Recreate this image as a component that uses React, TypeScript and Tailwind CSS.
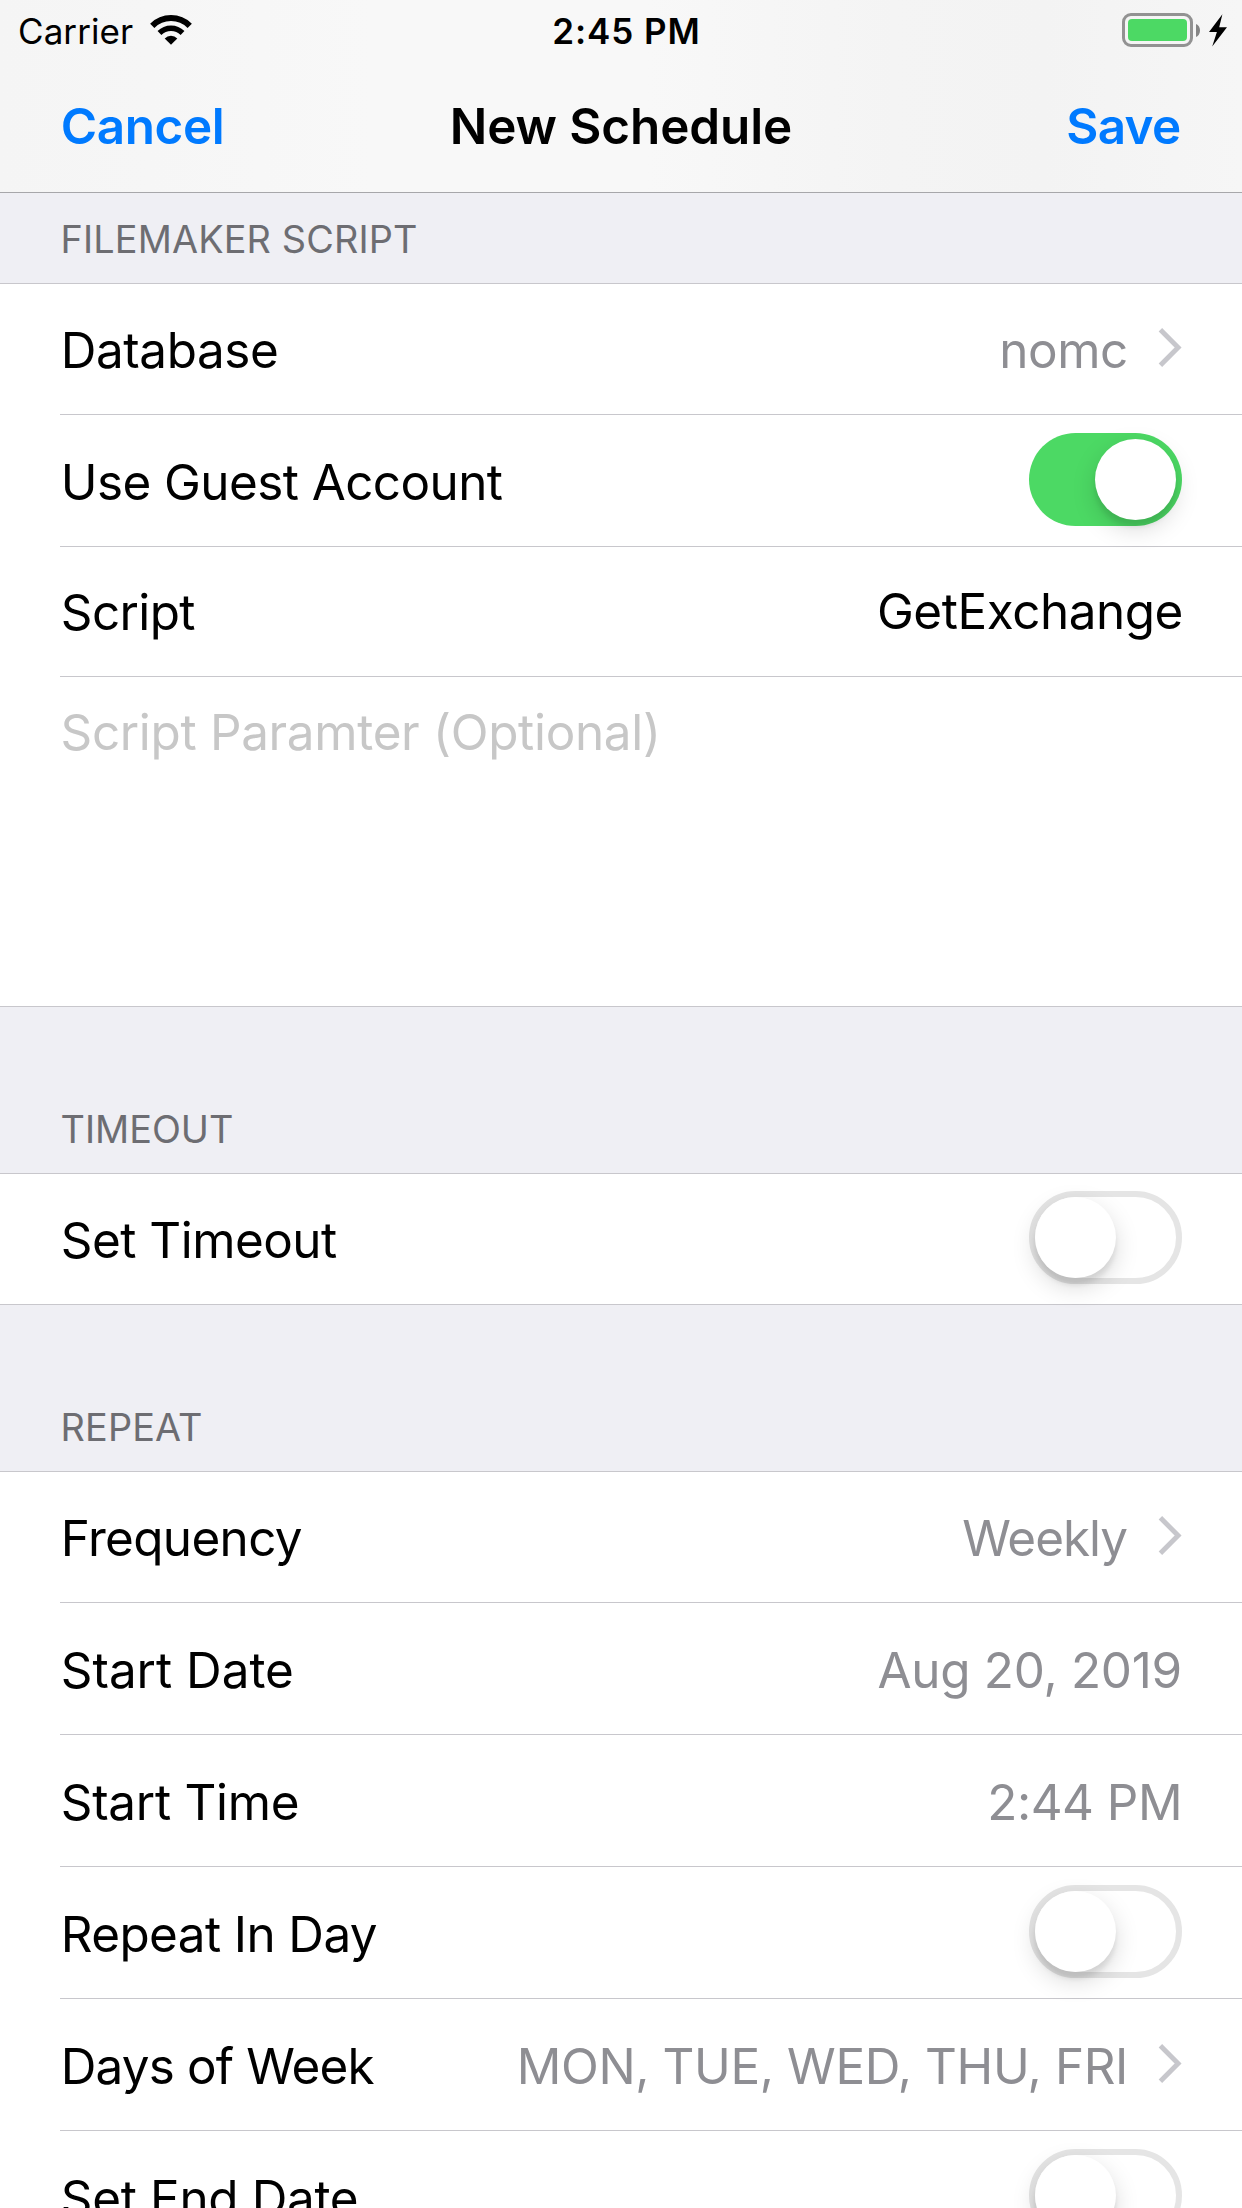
import type { ReactNode } from "react";

function WifiIcon() {
  return (
    <svg className="mt-[5px] ml-[17px] h-[31px] w-[42px]" viewBox="0 0 42 31" fill="none">
      <path d="M2.26 11.76A26.5 26.5 0 0 1 39.74 11.76" stroke="#000" strokeWidth="6" />
      <path d="M9.47 18.97A16.3 16.3 0 0 1 32.53 18.97" stroke="#000" strokeWidth="5.4" />
      <path d="M21 30.7L14.7 24.4A8.9 8.9 0 0 1 27.3 24.4Z" fill="#000" />
    </svg>
  );
}

function Battery() {
  return (
    <div className="mt-[4px] flex items-center">
      <div className="h-[34px] w-[71px] rounded-[9px] border-[3px] border-[#929292] p-[3px]">
        <div className="h-full w-full rounded-[4px] bg-[#4cd964]" />
      </div>
      <svg className="ml-[3px] h-[13px] w-[4px]" viewBox="0 0 4 13">
        <path d="M0 0C2.6 1 4 3.6 4 6.5S2.6 12 0 13Z" fill="#858585" />
      </svg>
      <svg className="ml-[9px] h-[33px] w-[18px]" viewBox="0 0 18 33">
        <path d="M13.4 0.3L0 18H7.9L3.2 32.6L18 13.2H10.2Z" fill="#000" />
      </svg>
    </div>
  );
}

function Chevron() {
  return (
    <svg className="mt-[8px] ml-[30px] h-[39px] w-[24px] shrink-0" viewBox="0 0 24 39" fill="none">
      <path d="M2.4 1.8L20.1 19.5L2.4 37.2" stroke="#c7c7cc" strokeWidth="4.9" />
    </svg>
  );
}

function Switch({ on = false }: { on?: boolean }) {
  return (
    <div
      className={
        on
          ? "-mt-[19px] flex h-[93px] w-[153px] shrink-0 justify-end rounded-full bg-[#4cd964] p-[6px]"
          : "-mt-[19px] flex h-[93px] w-[153px] shrink-0 justify-start rounded-full border-[6px] border-[#e5e5e5]"
      }
    >
      <div className="h-[81px] w-[81px] rounded-full bg-white shadow-[0_9px_24px_rgba(0,0,0,0.15),0_7px_5px_rgba(0,0,0,0.08)]" />
    </div>
  );
}

function SectionHeader({ title, className }: { title: string; className: string }) {
  return (
    <div
      className={`border-b border-[#c8c7cc] bg-[#efeff4] pl-[60.6px] text-[37.8px] leading-[46px] text-[#6d6d72] ${className}`}
    >
      {title}
    </div>
  );
}

function Row({
  label,
  className,
  last = false,
  children,
}: {
  label: string;
  className: string;
  last?: boolean;
  children: ReactNode;
}) {
  return (
    <div className={last ? "border-b border-[#c8c7cc] pl-[60px]" : "ml-[60px] border-b border-[#c8c7cc]"}>
      <div className={`flex items-start justify-between pr-[60px] ${className}`}>
        <span className="pl-[0.8px]">{label}</span>
        <div className="flex items-start tracking-normal">{children}</div>
      </div>
    </div>
  );
}

export default function App() {
  return (
    <div className="h-[2208px] w-[1242px] overflow-hidden bg-white font-['Inter',sans-serif] text-[49.4px] leading-[60px] whitespace-nowrap text-black">
      <header className="h-[193px] border-b border-[#a7a7aa] bg-[linear-gradient(90deg,#f5f5f5_0%,#f6f6f6_12%,#f8f8f8_30%,#f8f8f8_52%,#f4f4f4_72%,#f3f3f3_84%,#f6f6f6_100%)]">
        <div className="grid h-[96px] grid-cols-[1fr_auto_1fr] items-start pt-[9px] pr-[15px] pl-[18px] text-[35px] leading-[44px]">
          <div className="flex items-start">
            <span className="tracking-[0.075px]">Carrier</span>
            <WifiIcon />
          </div>
          <span className="ml-[8px] font-semibold tracking-[0.936px]">2:45 PM</span>
          <div className="flex justify-end">
            <Battery />
          </div>
        </div>
        <div className="grid grid-cols-[1fr_auto_1fr] px-[60px] font-semibold">
          <span className="pl-[0.8px] tracking-[-0.389px] text-[#007aff]">Cancel</span>
          <span className="tracking-[-0.081px]">New Schedule</span>
          <span className="mr-[1.5px] text-right tracking-[-0.7px] text-[#007aff]">Save</span>
        </div>
      </header>

      <SectionHeader title="FILEMAKER SCRIPT" className="h-[91px] pt-[23px] tracking-[0.139px]" />
      <Row label="Database" className="h-[130px] pt-[36px] tracking-[-0.42px]">
        <span className="tracking-[-0.354px] text-[#8e8e93]">nomc</span>
        <Chevron />
      </Row>
      <Row label="Use Guest Account" className="h-[131px] pt-[37px] tracking-[-0.562px]">
        <Switch on />
      </Row>
      <Row label="Script" className="h-[129px] pt-[35px] tracking-[-0.6px]">
        <span className="-mt-[1px] -mr-[1px] tracking-[-0.427px]">GetExchange</span>
      </Row>
      <div className="h-[330px] border-b border-[#c8c7cc] pt-[25px] pl-[60.5px] tracking-[-0.303px] text-[#c7c7c7]">
        Script Paramter (Optional)
      </div>

      <SectionHeader title="TIMEOUT" className="h-[167px] pt-[99px] tracking-[-0.02px]" />
      <Row label="Set Timeout" last className="h-[130px] pt-[36px] tracking-[-0.5px]">
        <Switch />
      </Row>

      <SectionHeader title="REPEAT" className="h-[167px] pt-[99px] tracking-[0.126px]" />
      <Row label="Frequency" className="h-[130px] pt-[36px] tracking-[-0.619px]">
        <span className="mr-[1px] tracking-[-1px] text-[#8e8e93]">Weekly</span>
        <Chevron />
      </Row>
      <Row label="Start Date" className="h-[131px] pt-[37px] tracking-[0px]">
        <span className="tracking-[-0.25px] text-[#8e8e93]">Aug 20, 2019</span>
      </Row>
      <Row label="Start Time" className="h-[131px] pt-[37px] tracking-[-0.261px]">
        <span className="tracking-[-0.5px] text-[#8e8e93]">2:44 PM</span>
      </Row>
      <Row label="Repeat In Day" className="h-[131px] pt-[37px] tracking-[-0.596px]">
        <Switch />
      </Row>
      <Row label="Days of Week" className="h-[131px] pt-[37px] tracking-[-0.846px]">
        <span className="tracking-[-0.39px] text-[#8e8e93]">MON, TUE, WED, THU, FRI</span>
        <Chevron />
      </Row>
      <Row label="Set End Date" className="h-[131px] pt-[37px] tracking-[-0.326px]">
        <Switch />
      </Row>
    </div>
  );
}
